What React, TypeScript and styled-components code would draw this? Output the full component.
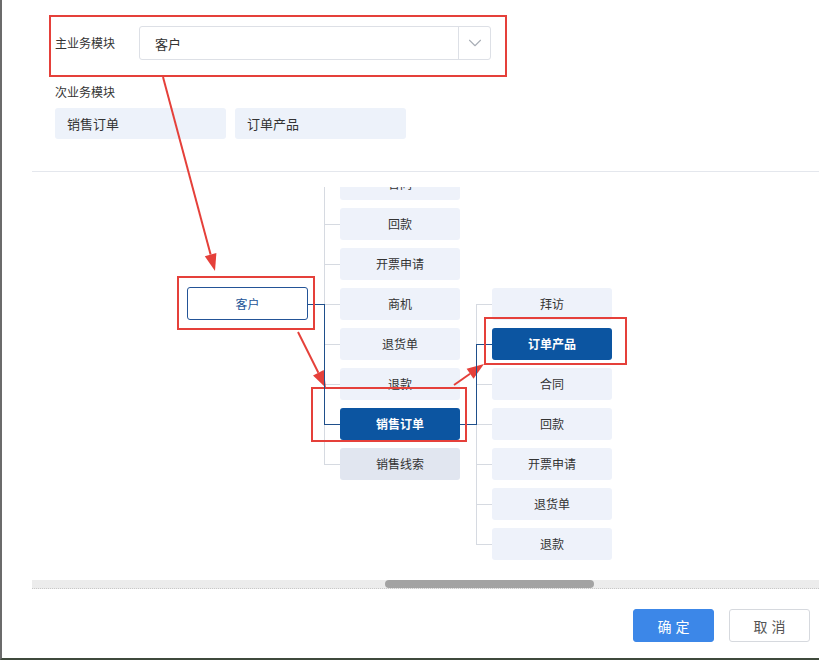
import styled, { createGlobalStyle } from "styled-components"
import { ChevronDown } from "lucide-react"

const GlobalStyle = createGlobalStyle`
  html, body {
    margin: 0;
    padding: 0;
    background: #fff;
  }
  body {
    font-family: "Noto Sans CJK SC", "Noto Sans", "Liberation Sans", sans-serif;
    color: #333;
  }
`

const LINE = "#d6dae1"
const PATH = "#1f4f8b"
const RED = "#e5403a"

const Page = styled.div`
  position: relative;
  width: 819px;
  height: 660px;
  overflow: hidden;
`

const Frame = styled.div`
  box-sizing: border-box;
  width: 100%;
  height: 100%;
  border-left: 2px solid #6b6b6b;
  border-bottom: 2px solid #3f4a3c;
  display: flex;
  flex-direction: column;
`

const Form = styled.div`
  padding: 26px 0 0 53px;
  display: flex;
  flex-direction: column;
`

const FieldRow = styled.div`
  display: flex;
  align-items: center;
  height: 34px;
`

const Label = styled.div`
  font-size: 12px;
  line-height: 20px;
  color: #333;
  width: 84px;
  flex-shrink: 0;
`

const SubLabel = styled(Label)`
  margin-top: 22px;
`

const Select = styled.div`
  box-sizing: border-box;
  width: 352px;
  height: 34px;
  border: 1px solid #dde0e6;
  border-radius: 3px;
  display: flex;
  align-items: center;
  background: #fff;
`

const SelectValue = styled.div`
  flex: 1;
  padding-left: 15px;
  font-size: 13px;
  color: #333;
`

const SelectArrow = styled.div`
  width: 31px;
  height: 100%;
  border-left: 1px solid #dde0e6;
  display: flex;
  align-items: center;
  justify-content: center;
  color: #a9aeb6;
`

const Tags = styled.div`
  display: flex;
  gap: 9px;
  margin-top: 6px;
`

const Tag = styled.div`
  box-sizing: border-box;
  width: 171px;
  height: 31px;
  border-radius: 3px;
  background: #edf2fa;
  padding-left: 12px;
  display: flex;
  align-items: center;
  font-size: 13px;
  color: #333;
`

const Divider = styled.div`
  margin: 32px 0 0 30px;
  border-top: 1px solid #e4e7ed;
`

const Viewport = styled.div`
  position: relative;
  margin: 15px 0 0 30px;
  height: 393px;
  overflow: hidden;
`

const Canvas = styled.div`
  padding: 100px 0 0 155px;
`

const Branch = styled.div`
  display: flex;
  align-items: center;
  height: 33px;
`

const Node = styled.div<{ $variant: "root" | "plain" | "active" | "muted" }>`
  box-sizing: border-box;
  flex-shrink: 0;
  width: ${(p) => (p.$variant === "root" ? 121 : 120)}px;
  height: ${(p) => (p.$variant === "root" ? 33 : 32)}px;
  border-radius: 3px;
  display: flex;
  align-items: center;
  justify-content: center;
  font-size: 12px;
  background: ${(p) =>
    p.$variant === "root" ? "#fff" : p.$variant === "active" ? "#0c55a1" : p.$variant === "muted" ? "#e1e6f0" : "#eef2fa"};
  color: ${(p) => (p.$variant === "root" ? "#235497" : p.$variant === "active" ? "#fff" : "#333")};
  font-weight: ${(p) => (p.$variant === "active" ? 700 : 400)};
  border: ${(p) => (p.$variant === "root" ? "1px solid #235497" : "none")};
`

const Children = styled.div<{ $lit: boolean }>`
  position: relative;
  flex-shrink: 0;
  margin-left: 16px;
  display: flex;
  flex-direction: column;
  gap: 8px;

  &::before {
    content: "";
    position: absolute;
    left: -16px;
    top: 50%;
    width: 16px;
    height: 1px;
    background: ${(p) => (p.$lit ? PATH : LINE)};
  }
`

const Rail = styled.div`
  position: absolute;
  left: 0;
  top: 16px;
  bottom: 16px;
  width: 1px;
  background: ${LINE};
`

const RailLit = styled.div`
  position: absolute;
  left: 0;
  width: 1px;
  background: ${PATH};
  z-index: 1;
`

const Item = styled.div<{ $lit: boolean }>`
  position: relative;
  display: flex;
  align-items: center;
  height: 32px;
  flex-shrink: 0;
  padding-left: 16px;

  &::before {
    content: "";
    position: absolute;
    left: 0;
    top: 16px;
    width: 16px;
    height: 1px;
    background: ${(p) => (p.$lit ? PATH : LINE)};
  }
`

const ScrollTrack = styled.div`
  position: relative;
  margin-left: 30px;
  height: 8px;
  background: #ececec;
  border-bottom: 1px dotted #c8c8c8;
`

const ScrollThumb = styled.div`
  position: absolute;
  left: 353px;
  top: 0;
  width: 209px;
  height: 8px;
  border-radius: 4px;
  background: #a3a3a3;
`

const Footer = styled.div`
  display: flex;
  justify-content: flex-end;
  gap: 15px;
  padding: 20px 9px 0 0;
`

const Button = styled.button<{ $primary?: boolean }>`
  box-sizing: border-box;
  width: 81px;
  height: 33px;
  border-radius: 3px;
  font-family: inherit;
  font-size: 14px;
  letter-spacing: 4px;
  text-indent: 4px;
  border: 1px solid ${(p) => (p.$primary ? "#3c87e8" : "#d6d9de")};
  background: ${(p) => (p.$primary ? "#3c87e8" : "#fff")};
  color: ${(p) => (p.$primary ? "#fff" : "#555")};
`

const Overlay = styled.svg`
  position: absolute;
  left: 0;
  top: 0;
  pointer-events: none;
`

type TreeNode = {
  label: string
  active?: boolean
  muted?: boolean
  children?: TreeNode[]
}

// first entry sits above the scrolled viewport, like in the original view
const tree: TreeNode = {
  label: "客户",
  children: [
    { label: "联系人" },
    { label: "合同" },
    { label: "回款" },
    { label: "开票申请" },
    { label: "商机" },
    { label: "退货单" },
    { label: "退款" },
    {
      label: "销售订单",
      active: true,
      children: [
        { label: "拜访" },
        { label: "订单产品", active: true },
        { label: "合同" },
        { label: "回款" },
        { label: "开票申请" },
        { label: "退货单" },
        { label: "退款" },
      ],
    },
    { label: "销售线索", muted: true },
  ],
}

function ChildList({ items }: { items: TreeNode[] }) {
  const activeIndex = items.findIndex((c) => c.active)
  const mid = (items.length * 40 - 8) / 2
  const center = activeIndex * 40 + 16
  return (
    <Children $lit={activeIndex >= 0}>
      <Rail />
      {activeIndex >= 0 && (
        <RailLit style={{ top: Math.min(mid, center), height: Math.abs(mid - center) + 1 }} />
      )}
      {items.map((child, i) => (
        <Item key={i} $lit={!!child.active}>
          <Node $variant={child.active ? "active" : child.muted ? "muted" : "plain"}>{child.label}</Node>
          {child.children && <ChildList items={child.children} />}
        </Item>
      ))}
    </Children>
  )
}

type Arrow = { x1: number; y1: number; x2: number; y2: number }

const arrows: Arrow[] = [
  { x1: 163, y1: 77, x2: 215, y2: 271 },
  { x1: 298, y1: 332, x2: 326, y2: 388 },
  { x1: 454, y1: 385, x2: 484, y2: 364 },
]

const frames = [
  { x: 50, y: 16, w: 456, h: 60 },
  { x: 178, y: 277, w: 136, h: 52 },
  { x: 312, y: 388, w: 154, h: 53 },
  { x: 485, y: 318, w: 141, h: 46 },
]

function ArrowMark({ x1, y1, x2, y2 }: Arrow) {
  const len = Math.hypot(x2 - x1, y2 - y1)
  const dx = (x2 - x1) / len
  const dy = (y2 - y1) / len
  const bx = x2 - dx * 17
  const by = y2 - dy * 17
  const nx = -dy * 6
  const ny = dx * 6
  return (
    <g>
      <line x1={x1} y1={y1} x2={bx} y2={by} stroke={RED} strokeWidth={2} />
      <polygon points={`${x2},${y2} ${bx + nx},${by + ny} ${bx - nx},${by - ny}`} fill={RED} />
    </g>
  )
}

export default function App() {
  return (
    <Page>
      <GlobalStyle />
      <Frame>
        <Form>
          <FieldRow>
            <Label>主业务模块</Label>
            <Select>
              <SelectValue>客户</SelectValue>
              <SelectArrow>
                <ChevronDown size={22} strokeWidth={1.2} />
              </SelectArrow>
            </Select>
          </FieldRow>
          <SubLabel>次业务模块</SubLabel>
          <Tags>
            <Tag>销售订单</Tag>
            <Tag>订单产品</Tag>
          </Tags>
        </Form>
        <Divider />
        <Viewport>
          <Canvas>
            <Branch>
              <Node $variant="root">{tree.label}</Node>
              {tree.children && <ChildList items={tree.children} />}
            </Branch>
          </Canvas>
        </Viewport>
        <ScrollTrack>
          <ScrollThumb />
        </ScrollTrack>
        <Footer>
          <Button $primary>确定</Button>
          <Button>取消</Button>
        </Footer>
      </Frame>
      <Overlay width={819} height={660}>
        {frames.map((f, i) => (
          <rect key={i} x={f.x} y={f.y} width={f.w} height={f.h} fill="none" stroke={RED} strokeWidth={2} />
        ))}
        {arrows.map((a, i) => (
          <ArrowMark key={i} {...a} />
        ))}
      </Overlay>
    </Page>
  )
}
